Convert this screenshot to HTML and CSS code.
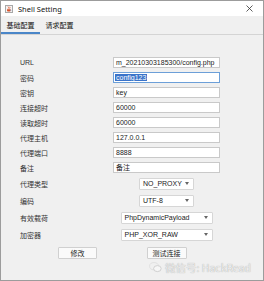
FILE: index.html
```html
<!DOCTYPE html>
<html lang="zh-CN">
  <head>
    <meta charset="UTF-8" />
    <meta name="viewport" content="width=device-width, initial-scale=1.0" />
    <title>Shell Setting</title>
    <link rel="stylesheet" href="styles.css">
  </head>
  <body>
    <div class="window">
      <!-- 标题栏 -->
      <div class="titlebar">
        <svg class="app-icon" width="8" height="8" viewBox="0 0 8 8">
          <rect x="0.5" y="0.5" width="7" height="7" fill="#f4f4f4" stroke="#a8a8a8" />
          <path d="M3 1.5 Q4 2.5 3.2 3.6 M4.6 1.8 Q5.4 2.7 4.6 3.6" stroke="#e0562a" stroke-width="0.8" fill="none" />
          <path d="M2 4.2 H5.6 V5.6 Q5.6 6.6 4.6 6.6 H3 Q2 6.6 2 5.6 Z" fill="#d9532b" />
          <path d="M5.6 4.6 Q6.6 4.8 5.6 5.8" stroke="#5b7fb3" stroke-width="0.6" fill="none" />
        </svg>
        <span class="title">Shell Setting</span>
        <svg class="close" width="7" height="7" viewBox="0 0 7 7">
          <path d="M0.5 0.5 L6.5 6.5 M6.5 0.5 L0.5 6.5" stroke="#333" stroke-width="0.8" />
        </svg>
      </div>
      <!-- 选项卡 -->
      <div class="tabs">
        <div class="tab active">基础配置</div>
        <div class="tab">请求配置</div>
      </div>
      <!-- 基础配置表单 -->
      <div class="panel">
        <div class="form">
          <span class="label">URL</span>
          <div class="field">m_20210303185300/config.php</div>
          <span class="label">密码</span>
          <div class="field focus"><span class="selected">config123</span></div>
          <span class="label">密钥</span>
          <div class="field">key</div>
          <span class="label">连接超时</span>
          <div class="field">60000</div>
          <span class="label">读取超时</span>
          <div class="field">60000</div>
          <span class="label">代理主机</span>
          <div class="field">127.0.0.1</div>
          <span class="label">代理端口</span>
          <div class="field">8888</div>
          <span class="label">备注</span>
          <div class="field">备注</div>

          <span class="label">代理类型</span>
          <div class="combo small"><span>NO_PROXY</span><i class="arrow"></i></div>
          <span class="label">编码</span>
          <div class="combo small"><span>UTF-8</span><i class="arrow"></i></div>
          <span class="label">有效载荷</span>
          <div class="combo wide"><span>PhpDynamicPayload</span><i class="arrow"></i></div>
          <span class="label">加密器</span>
          <div class="combo wide"><span>PHP_XOR_RAW</span><i class="arrow"></i></div>

          <button type="button" class="btn btn-edit">修改</button>
          <button type="button" class="btn btn-test">测试连接</button>
        </div>
      </div>
      <!-- 水印 -->
      <div class="watermark">
        <svg width="13" height="11" viewBox="0 0 13 11">
          <ellipse cx="5" cy="4.2" rx="4.4" ry="3.6" fill="none" stroke="#e0e0e0" stroke-width="1" />
          <ellipse cx="8.4" cy="6.6" rx="3.8" ry="3" fill="#f6f6f6" stroke="#d0d0d0" stroke-width="1" />
        </svg>
        <span>微信号: HackRead</span>
      </div>
    </div>
  </body>
</html>
```

FILE: styles.css
```css
* {
  box-sizing: border-box;
}

body {
  margin: 0;
  font-family: "Liberation Sans", "Noto Sans CJK SC", sans-serif;
  font-size: 7px;
  color: #222;
}

.window {
  position: relative;
  width: 264px;
  height: 281px;
  border: 1px solid #9c9c9c;
  background-color: #f0f0f0;
  overflow: hidden;
}

/* 标题栏 */
.titlebar {
  height: 15px;
  background-color: #fff;
  display: flex;
  align-items: center;
  padding-left: 4px;
}

.app-icon {
  margin-right: 5px;
}

.title {
  font-family: "Noto Sans", sans-serif;
  font-size: 7.5px;
  color: #111;
}

.close {
  margin-left: auto;
  margin-right: 10px;
}

/* 选项卡 */
.tabs {
  height: 19px;
  display: flex;
  border-bottom: 1px solid #d4d4d4;
}

.tab {
  width: 39px;
  display: flex;
  align-items: center;
  justify-content: center;
  padding-top: 1px;
  border-bottom: 2px solid transparent;
  color: #111;
}

.tab.active {
  border-bottom-color: #4a86c8;
}

/* 表单 */
.panel {
  padding: 20px 0 0 19px;
}

.form {
  display: grid;
  grid-template-columns: 93px 107px;
  grid-template-rows: repeat(8, 15px) repeat(4, 17px) 19px;
  align-items: center;
}

.label {
  color: #333;
}

.field {
  height: 11px;
  line-height: 9px;
  background-color: #fff;
  border: 1px solid #c9c9c9;
  padding-left: 2px;
  white-space: nowrap;
  overflow: hidden;
}

.field.focus {
  border-color: #6c9fd8;
  padding-left: 1px;
}

.selected {
  background-color: #3a73c9;
  color: #fff;
  padding: 0 1px;
}

.combo {
  justify-self: center;
  height: 12px;
  display: flex;
  align-items: center;
  background-color: #fff;
  border: 1px solid #d6d6d6;
  border-radius: 1px;
  padding: 0 4px 0 3px;
}

.combo.small {
  width: 55px;
}

.combo.wide {
  width: 92px;
}

.arrow {
  margin-left: auto;
  width: 0;
  height: 0;
  border-left: 2.5px solid transparent;
  border-right: 2.5px solid transparent;
  border-top: 3px solid #666;
}

/* 按钮 */
.btn {
  height: 12px;
  padding: 0;
  font: inherit;
  color: #222;
  background-color: #fafafa;
  border: 1px solid #d0d0d0;
  border-radius: 1px;
}

.btn-edit {
  width: 39px;
  justify-self: end;
  margin-right: 16px;
}

.btn-test {
  width: 40px;
  justify-self: center;
}

/* 水印 */
.watermark {
  position: absolute;
  left: 148px;
  top: 259px;
  display: flex;
  align-items: center;
  gap: 3px;
  font-family: "Noto Sans CJK SC", sans-serif;
  font-size: 10.5px;
  color: #ededed;
  text-shadow: 0 0 1px #9a9a9a;
}
```
